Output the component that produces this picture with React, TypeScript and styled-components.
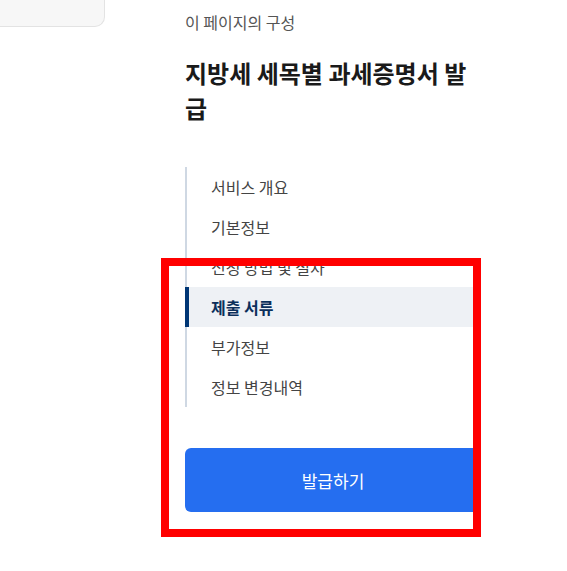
import React from 'react';
import styled, { createGlobalStyle } from 'styled-components';

const GlobalStyle = createGlobalStyle`
  html, body {
    margin: 0;
    padding: 0;
    background: #ffffff;
  }
  body {
    font-family: "Noto Sans CJK KR", "Noto Sans", sans-serif;
  }
`;

const navItems = [
  '서비스 개요',
  '기본정보',
  '신청 방법 및 절차',
  '제출 서류',
  '부가정보',
  '정보 변경내역',
];

export default function App() {
  return (
    <>
      <GlobalStyle />
      <Page>
        <SideCard />
        <Toc>
          <Label>이 페이지의 구성</Label>
          <Title>지방세 세목별 과세증명서 발급</Title>
          <NavList>
            {navItems.map((item) => (
              <NavItem key={item} $active={item === '제출 서류'}>
                {item}
              </NavItem>
            ))}
          </NavList>
          <IssueButton type="button">발급하기</IssueButton>
        </Toc>
        <Highlight />
      </Page>
    </>
  );
}

const Page = styled.div`
  position: relative;
  display: flex;
  align-items: flex-start;
  width: 567px;
  height: 571px;
  overflow: hidden;
`;

const SideCard = styled.div`
  width: 104px;
  height: 26px;
  background: #f7f7f7;
  border: 1px solid #e3e3e3;
  border-top: none;
  border-left: none;
  border-bottom-right-radius: 10px;
  flex-shrink: 0;
`;

const Toc = styled.div`
  display: flex;
  flex-direction: column;
  width: 296px;
  margin-left: 80px;
  padding-top: 11px;
`;

const Label = styled.div`
  font-size: 16px;
  line-height: 22px;
  color: #555;
`;

const Title = styled.h2`
  margin: 22px 0 0;
  font-size: 24px;
  font-weight: 700;
  line-height: 35px;
  color: #1a1a1a;
`;

const NavList = styled.ul`
  list-style: none;
  margin: 42px 0 0;
  padding: 0;
  border-left: 2px solid #cfd8e3;
`;

const NavItem = styled.li<{ $active?: boolean }>`
  height: 40px;
  display: flex;
  align-items: center;
  padding-left: 22px;
  margin-left: -2px;
  font-size: 16px;
  color: ${(p) => (p.$active ? '#0b2f5b' : '#444')};
  font-weight: ${(p) => (p.$active ? 700 : 400)};
  background: ${(p) => (p.$active ? '#eef1f5' : 'transparent')};
  border-left: 4px solid ${(p) => (p.$active ? '#003675' : 'transparent')};
  box-sizing: border-box;
`;

const IssueButton = styled.button`
  margin-top: 41px;
  height: 64px;
  border: none;
  border-radius: 6px;
  background: #256ef0;
  color: #ffffff;
  font-family: inherit;
  font-size: 17px;
  font-weight: 400;
  cursor: pointer;
`;

const Highlight = styled.div`
  position: absolute;
  left: 161px;
  top: 258px;
  width: 320px;
  height: 279px;
  border: 8px solid #ff0000;
  box-sizing: border-box;
  pointer-events: none;
`;
